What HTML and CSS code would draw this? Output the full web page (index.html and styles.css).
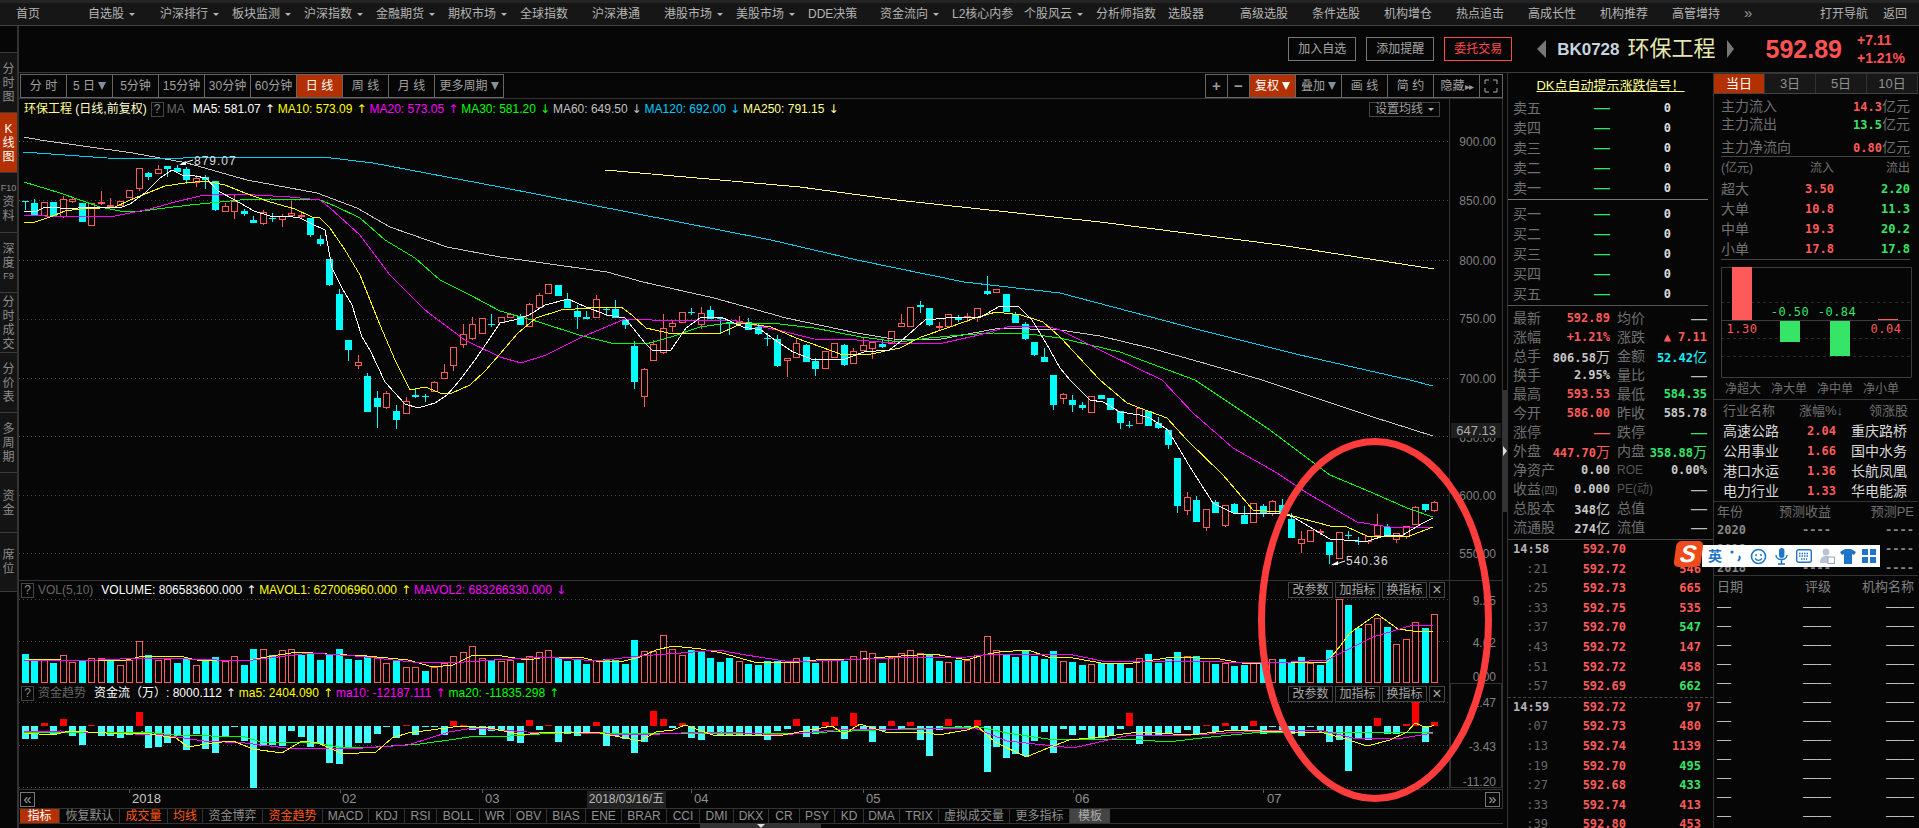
FILE: index.html
```html
<!DOCTYPE html>
<html>
<head>
  <meta charset="utf-8">
  <title>BK0728 环保工程</title>
  <link rel="stylesheet" href="styles.css">
</head>
<body>
<nav class="nav">
  <a>首页</a><a>自选股<i class="caret"></i></a><a>沪深排行<i class="caret"></i></a><a>板块监测<i class="caret"></i></a><a>沪深指数<i class="caret"></i></a><a>金融期货<i class="caret"></i></a><a>期权市场<i class="caret"></i></a><a>全球指数</a><a>沪深港通</a><a>港股市场<i class="caret"></i></a><a>美股市场<i class="caret"></i></a><a>DDE决策</a><a>资金流向<i class="caret"></i></a><a>L2核心内参</a><a>个股风云<i class="caret"></i></a><a>分析师指数</a><a>选股器</a><a>高级选股</a><a>条件选股</a><a>机构增仓</a><a>热点追击</a><a>高成长性</a><a>机构推荐</a><a>高管增持</a><a class="more">»</a>
  <div class="nav-right"><a>打开导航</a><a>返回</a></div>
</nav>

<div class="page">
  <aside class="side">
    <div class="side-tab">分<br>时<br>图</div>
    <div class="side-tab on">K<br>线<br>图</div>
    <div class="side-tab"><small>F10</small><span>资<br>料</span></div>
    <div class="side-tab"><span>深<br>度</span><small>F9</small></div>
    <div class="side-tab">分<br>时<br>成<br>交</div>
    <div class="side-tab">分<br>价<br>表</div>
    <div class="side-tab">多<br>周<br>期</div>
    <div class="side-tab">资<br>金</div>
    <div class="side-tab">席<br>位</div>
  </aside>

  <div class="main">
    <header class="head">
      <div class="hbtn">加入自选</div>
      <div class="hbtn">添加提醒</div>
      <div class="hbtn trade">委托交易</div>
      <i class="tri-left"></i>
      <span class="code">BK0728</span>
      <span class="name">环保工程</span>
      <i class="tri-right"></i>
      <span class="price">592.89</span>
      <div class="change"><div>+7.11</div><div>+1.21%</div></div>
    </header>

    <div class="work">
      <section class="chart">
        <div class="tools">
          <div class="tabs">
            <div class="tab">分 时</div><div class="tab">5 日<i class="drop"></i></div><div class="tab">5分钟</div><div class="tab">15分钟</div><div class="tab">30分钟</div><div class="tab">60分钟</div><div class="tab on">日 线</div><div class="tab">周 线</div><div class="tab">月 线</div><div class="tab wide">更多周期<i class="drop"></i></div>
          </div>
          <div class="tabs">
            <div class="tab sq">+</div><div class="tab sq">−</div><div class="tab on">复权<i class="drop white"></i></div><div class="tab">叠加<i class="drop"></i></div><div class="tab">画 线</div><div class="tab">简 约</div><div class="tab">隐藏<span class="hide-arrows">▸▸</span></div><div class="tab sq full"><svg width="14" height="14" viewBox="0 0 14 14"><path d="M1 5V1h4M9 1h4v4M13 9v4H9M5 13H1V9" fill="none" stroke="#aaa"/></svg></div>
          </div>
        </div>

        <div class="plot">
          <svg id="plot" class="plot-svg" viewBox="19 99 1484 709" width="1484" height="709"></svg>

          <div class="legend kline">
            <span class="yl">环保工程</span><span class="pale">&nbsp;(日线,前复权)</span><b class="qm">?</b><span class="gr">MA</span>
            <span class="wh ma">MA5: 581.07<i>↑</i></span><span class="ye ma">MA10: 573.09<i>↑</i></span><span class="mg ma">MA20: 573.05<i>↑</i></span><span class="gn ma">MA30: 581.20<i>↓</i></span><span class="si ma">MA60: 649.50<i>↓</i></span><span class="bl ma">MA120: 692.00<i>↓</i></span><span class="yl ma">MA250: 791.15<i>↓</i></span>
          </div>
          <div class="set-ma">设置均线<i class="caret"></i></div>

          <div class="legend vol">
            <b class="qm">?</b><span class="gr lab">VOL(5,10)</span>
            <span class="wh ma">VOLUME: 806583600.000<i>↑</i></span><span class="ye ma">MAVOL1: 627006960.000<i>↑</i></span><span class="mg ma">MAVOL2: 683266330.000<i>↓</i></span>
          </div>
          <div class="pane-btns vol-btns"><div>改参数</div><div>加指标</div><div>换指标</div><div class="x">×</div></div>

          <div class="legend flow">
            <b class="qm">?</b><span class="gr lab">资金趋势</span>
            <span class="wh ma">资金流（万）: 8000.112<i>↑</i></span><span class="ye ma">ma5: 2404.090<i>↑</i></span><span class="mg ma">ma10: -12187.111<i>↑</i></span><span class="gn ma">ma20: -11835.298<i>↑</i></span>
          </div>
          <div class="pane-btns flow-btns"><div>改参数</div><div>加指标</div><div>换指标</div><div class="x">×</div></div>

          <div class="pager left">«</div>
          <div class="pager right">»</div>
          <div class="date-tip">2018/03/16/五</div>
        </div>

        <div class="index-tabs">
          <div class="on">指标</div><div>恢复默认</div><div class="hot">成交量</div><div class="hot">均线</div><div>资金博弈</div><div class="hot">资金趋势</div><div>MACD</div><div>KDJ</div><div>RSI</div><div>BOLL</div><div>WR</div><div>OBV</div><div>BIAS</div><div>ENE</div><div>BRAR</div><div>CCI</div><div>DMI</div><div>DKX</div><div>CR</div><div>PSY</div><div>KD</div><div>DMA</div><div>TRIX</div><div>虚拟成交量</div><div>更多指标</div><div class="tpl">模板</div>
        </div>
        <div class="foot"><div class="foot-handle"><i></i></div></div>
      </section>

      <div class="gutter"><div class="gutter-bar"><i></i></div></div>

      <section class="book">
        <div class="book-title"><u>DK点自动提示涨跌信号！</u></div>
        <div class="levels">
          <div><span>卖五</span><em>—</em><b>0</b></div>
          <div><span>卖四</span><em>—</em><b>0</b></div>
          <div><span>卖三</span><em>—</em><b>0</b></div>
          <div><span>卖二</span><em>—</em><b>0</b></div>
          <div><span>卖一</span><em>—</em><b>0</b></div>
        </div>
        <div class="levels buy">
          <div><span>买一</span><em>—</em><b>0</b></div>
          <div><span>买二</span><em>—</em><b>0</b></div>
          <div><span>买三</span><em>—</em><b>0</b></div>
          <div><span>买四</span><em>—</em><b>0</b></div>
          <div><span>买五</span><em>—</em><b>0</b></div>
        </div>
        <div class="quote">
          <div><span>最新</span><b class="up">592.89</b></div><div><span>均价</span><em>—</em></div>
          <div><span>涨幅</span><b class="up">+1.21%</b></div><div><span>涨跌</span><b class="up">▲ 7.11</b></div>
          <div><span>总手</span><b>806.58<small>万</small></b></div><div><span>金额</span><b class="cy">52.42<small>亿</small></b></div>
          <div><span>换手</span><b>2.95%</b></div><div><span>量比</span><em>—</em></div>
          <div><span>最高</span><b class="up">593.53</b></div><div><span>最低</span><b class="dn">584.35</b></div>
          <div><span>今开</span><b class="up">586.00</b></div><div><span>昨收</span><b>585.78</b></div>
          <div><span>涨停</span><em class="up">—</em></div><div><span>跌停</span><em class="dn">—</em></div>
          <div><span>外盘</span><b class="up">447.70<small>万</small></b></div><div><span>内盘</span><b class="dn">358.88<small>万</small></b></div>
          <div><span>净资产</span><b>0.00</b></div><div><span class="tiny">ROE</span><b>0.00%</b></div>
          <div><span>收益<small class="quarter">(四)</small></span><b>0.000</b></div><div><span class="tiny">PE(动)</span><em>—</em></div>
          <div><span>总股本</span><b>348<small>亿</small></b></div><div><span>总值</span><em>—</em></div>
          <div><span>流通股</span><b>274<small>亿</small></b></div><div><span>流值</span><em>—</em></div>
        </div>
        <div class="ticks">
          <div><span class="min">14:58</span><b class="up">592.70</b><b class="dn">652</b></div>
          <div><span>:21</span><b class="up">592.72</b><b class="up">546</b></div>
          <div><span>:25</span><b class="up">592.73</b><b class="up">665</b></div>
          <div><span>:33</span><b class="up">592.75</b><b class="up">535</b></div>
          <div><span>:37</span><b class="up">592.70</b><b class="dn">547</b></div>
          <div><span>:43</span><b class="up">592.72</b><b class="up">147</b></div>
          <div><span>:51</span><b class="up">592.72</b><b class="up">458</b></div>
          <div><span>:57</span><b class="up">592.69</b><b class="dn">662</b></div>
        </div>
        <div class="ticks next">
          <div><span class="min">14:59</span><b class="up">592.72</b><b class="up">97</b></div>
          <div><span>:07</span><b class="up">592.73</b><b class="up">480</b></div>
          <div><span>:13</span><b class="up">592.74</b><b class="up">1139</b></div>
          <div><span>:19</span><b class="up">592.70</b><b class="dn">495</b></div>
          <div><span>:27</span><b class="up">592.68</b><b class="dn">433</b></div>
          <div><span>:33</span><b class="up">592.74</b><b class="up">413</b></div>
          <div><span>:39</span><b class="up">592.80</b><b class="up">453</b></div>
        </div>
      </section>

      <section class="side-info">
        <div class="day-tabs"><div class="on">当日</div><div>3日</div><div>5日</div><div>10日</div></div>
        <div class="money">
          <div><span>主力流入</span><p><b class="up">14.3</b>亿元</p></div>
          <div><span>主力流出</span><p><b class="dn">13.5</b>亿元</p></div>
          <div class="net"><span>主力净流向</span><p><b class="up">0.80</b>亿元</p></div>
        </div>
        <div class="orders">
          <div class="orders-head"><span>(亿元)</span><span>流入</span><span>流出</span></div>
          <div><span>超大</span><b class="up">3.50</b><b class="dn">2.20</b></div>
          <div><span>大单</span><b class="up">10.8</b><b class="dn">11.3</b></div>
          <div><span>中单</span><b class="up">19.3</b><b class="dn">20.2</b></div>
          <div><span>小单</span><b class="up">17.8</b><b class="dn">17.8</b></div>
        </div>
        <svg class="net-bars" width="191" height="111" viewBox="1722 268 191 111">
          <path class="grid" d="M1722 303.5H1912M1722 339.5H1912M1722 357.5H1912"/>
          <path class="frame" d="M1722.5 378V268.5H1912.5V378M1722.5 378.5H1912.5M1722 321.5H1912"/>
          <rect x="1733" y="268" width="20" height="53" fill="#ff5a5a"/>
          <rect x="1781" y="322" width="20" height="21" fill="#36e468"/>
          <rect x="1831" y="322" width="20" height="35" fill="#36e468"/>
          <rect x="1879" y="320" width="20" height="1" fill="#ff5a5a"/>
          <text x="1743" y="334" fill="#ff5a5a">1.30</text>
          <text x="1791" y="317" fill="#36e468">-0.50</text>
          <text x="1838" y="317" fill="#36e468">-0.84</text>
          <text x="1887" y="334" fill="#ff5a5a">0.04</text>
        </svg>
        <div class="net-labels"><span>净超大</span><span>净大单</span><span>净中单</span><span>净小单</span></div>
        <div class="sector">
          <div class="sector-head"><span>行业名称</span><span>涨幅%↓</span><span>领涨股</span></div>
          <div><span>高速公路</span><b class="up">2.04</b><span>重庆路桥</span></div>
          <div><span>公用事业</span><b class="up">1.66</b><span>国中水务</span></div>
          <div><span>港口水运</span><b class="up">1.36</b><span>长航凤凰</span></div>
          <div><span>电力行业</span><b class="up">1.33</b><span>华电能源</span></div>
        </div>
        <div class="forecast">
          <div><span>年份</span><span>预测收益</span><span>预测PE</span></div>
          <div><b>2020</b><b>----</b><b>----</b></div>
          <div><b>2019</b><b>----</b><b>----</b></div>
          <div><b>2018</b><b>----</b><b>----</b></div>
        </div>
        <div class="ratings">
          <div class="ratings-head"><span>日期</span><span>评级</span><span>机构名称</span></div>
          <div><em>—</em><em>——</em><em>——</em></div>
          <div><em>—</em><em>——</em><em>——</em></div>
          <div><em>—</em><em>——</em><em>——</em></div>
          <div><em>—</em><em>——</em><em>——</em></div>
          <div><em>—</em><em>——</em><em>——</em></div>
          <div><em>—</em><em>——</em><em>——</em></div>
          <div><em>—</em><em>——</em><em>——</em></div>
          <div><em>—</em><em>——</em><em>——</em></div>
          <div><em>—</em><em>——</em><em>——</em></div>
          <div><em>—</em><em>——</em><em>——</em></div>
          <div><em>—</em><em>——</em><em>——</em></div>
          <div><em>—</em><em>——</em><em>——</em></div>
        </div>
      </section>
    </div>
  </div>
</div>

<!-- input method bar floats over the quote panels -->
<div class="ime">
  <div class="ime-logo"><span>S</span></div>
  <div class="ime-bar">
    <span class="ime-lang">英</span>
    <svg width="12" height="16" viewBox="0 0 12 16"><circle cx="2" cy="4" r="1.6" fill="#1f76c9"/><path d="M9 8c1 1 1 3-1 5" stroke="#1f76c9" stroke-width="2" fill="none"/></svg>
    <svg width="17" height="17" viewBox="0 0 17 17"><circle cx="8.5" cy="8.5" r="7" fill="none" stroke="#1f76c9" stroke-width="1.6"/><circle cx="6" cy="7" r="1" fill="#1f76c9"/><circle cx="11" cy="7" r="1" fill="#1f76c9"/><path d="M5 10.5c2 2.5 5 2.5 7 0" stroke="#1f76c9" stroke-width="1.4" fill="none"/></svg>
    <svg width="13" height="17" viewBox="0 0 13 17"><rect x="4" y="0" width="5.4" height="10" rx="2.7" fill="#1f76c9"/><path d="M1 7c0 6 11 6 11 0M6.5 12v4M3 16h7" stroke="#1f76c9" stroke-width="1.5" fill="none"/></svg>
    <svg width="16" height="14" viewBox="0 0 16 14"><rect x=".7" y=".7" width="14.6" height="12.6" rx="2" fill="none" stroke="#1f76c9" stroke-width="1.4"/><path d="M3 4.5h10M3 7h10M5 10h6" stroke="#1f76c9" stroke-width="1.5" stroke-dasharray="1.5 1"/></svg>
    <svg class="tight" width="15" height="16" viewBox="0 0 15 16"><circle cx="6" cy="4" r="3.4" fill="#b9c4d0"/><path d="M0 15c0-6 3-7 6-7s6 1 6 7z" fill="#b9c4d0"/><rect x="8" y="9" width="6.5" height="6.5" fill="#fff" stroke="#9aa6b2"/></svg>
    <svg class="tight2" width="16" height="15" viewBox="0 0 16 15"><path d="M5 0h6l5 3-2 3-2-1v10H4V5L2 6 0 3z" fill="#1f76c9"/></svg>
    <svg width="14" height="14" viewBox="0 0 14 14"><path d="M0 0h6v6H0zM8 0h6v6H8zM0 8h6v6H0zM8 8h6v6H8z" fill="#1f76c9"/></svg>
  </div>
</div>

<script src="chart.js"></script>
</body>
</html>
```

FILE: styles.css
```css
* {box-sizing:border-box;}
html, body {margin:0;height:100%;}
body {background:#060606;color:#a0a0a0;font:12px/15px "Liberation Sans","Noto Sans CJK SC",sans-serif;overflow:hidden;width:1919px;height:828px;position:relative;}
i, em {font-style:normal;}
b {font-weight:bold;}

.up {color:#ff5a5a;}
.dn {color:#36e468;}
.cy {color:#19f0ff;}

/* top nav */
.nav {height:26px;padding:0 12px 0 16px;display:flex;align-items:center;background:#161616;border-top:3px solid #242424;border-bottom:1px solid #444;color:#b4b4b4;}
.nav a {width:72px;flex:none;display:flex;align-items:center;}
.nav a.more {color:#999;font-size:15px;width:auto;margin-top:-3px;}
.nav-right {margin-left:auto;display:flex;gap:15px;}
.nav-right a {width:auto;}
.caret {display:inline-block;margin-left:5px;border:3px solid transparent;border-top:3px solid #b4b4b4;border-bottom:0;}

.page {display:flex;height:802px;}

/* left tabs */
.side {width:19px;flex:none;padding-top:26px;border-right:2px solid #333;}
.side-tab {height:60px;display:flex;flex-direction:column;justify-content:center;align-items:center;font-size:12px;line-height:14px;color:#8c8c8c;background:#141414;border-top:1px solid #3c3c3c;text-align:center;}
.side-tab small {display:block;font-size:9px;line-height:13px;}
.side-tab.on {background:#b33000;color:#fff;}
.side-tab:last-child {border-bottom:1px solid #3c3c3c;}

.main {flex:1;min-width:0;}

/* code header */
.head {height:47px;border-bottom:1px solid #3a3a3a;display:flex;align-items:center;justify-content:flex-end;padding-right:16px;}
.hbtn {width:68px;height:24px;line-height:22px;text-align:center;border:1px solid #777;color:#a8a8a8;margin-right:10px;}
.hbtn.trade {border-color:#ff4a4a;color:#ff4a4a;margin-right:25px;}
.tri-left, .tri-right {width:0;height:0;border:9px solid transparent;}
.tri-left {border-left:0;border-right:9px solid #777;}
.tri-right {border-right:0;border-left:7px solid #777;}
.code {font-size:17px;font-weight:bold;color:#c8d4e0;margin-left:11px;}
.name {font-size:22px;color:#e6e6b0;margin:0 11px 0 8px;line-height:26px;}
.price {font-size:25px;font-weight:bold;color:#ff5252;margin-left:32px;}
.change {font-size:14px;font-weight:bold;color:#ff5252;margin-left:15px;line-height:18px;width:46px;}

.work {display:flex;height:755px;}

/* chart */
.chart {width:1484px;flex:none;}
.tools {height:26px;padding:1px 0 1px 1px;display:flex;justify-content:space-between;border-bottom:1px solid #333;}
.tabs {display:flex;}
.tab {width:47px;height:24px;line-height:22px;text-align:center;border:1px solid #666;margin-left:-1px;color:#a0a0a0;white-space:nowrap;}
.tabs:first-child .tab:first-child {margin-left:0;}
.tab.on {background:#b33000;color:#fff;}
.tab.wide {width:70px;}
.tab.sq {width:23px;font-size:15px;font-weight:bold;color:#999;}
.tab.full {width:24px;}
.tab.full svg {margin-top:4px;}
.drop {display:inline-block;margin-left:3px;border:4px solid transparent;border-top:8px solid #8090a0;border-bottom:0;}
.drop.white {border-top-color:#fff;}
.hide-arrows {font-size:10px;letter-spacing:-1px;color:#999;}

.plot {position:relative;height:709px;}
.plot-svg {display:block;}
.plot-svg text {font-size:12px;fill:#808080;}
.plot-svg .peak {fill:#ddd;letter-spacing:1px;}
.plot-svg .last {fill:#aaa;font-size:13px;}
.plot-svg .tick-label {fill:#909090;font-size:13px;}
.plot-svg .year {fill:#c8c8c8;font-size:13px;}

.legend {position:absolute;display:flex;align-items:center;white-space:nowrap;height:15px;}
.legend.kline {left:5px;top:3px;}
.legend.vol {left:2px;top:484px;}
.legend.flow {left:2px;top:587px;}
.qm {width:13px;height:15px;line-height:13px;border:1px solid #444;color:#888;text-align:center;font-weight:normal;margin:0 3px 0 4px;}
.legend.vol .qm, .legend.flow .qm {margin:0 4px 0 0;}
.ma {display:inline-flex;}
.ma i {width:7px;margin:0 6px 0 4px;font-family:"DejaVu Sans",sans-serif;}
.kline .gr {margin-right:8px;}
.lab {margin-right:8px;}
.wh {color:#fff;} .ye {color:#ff0;} .mg {color:#f0f;} .gn {color:#0f0;} .si {color:#c0c0c0;} .bl {color:#0cf;} .yl {color:#ffff90;} .gr {color:#666;} .pale {color:#ffffc8;}

.set-ma {position:absolute;right:63px;top:3px;width:71px;height:15px;line-height:13px;border:1px solid #444;text-align:center;color:#a0a0a0;}
.set-ma .caret {margin-bottom:2px;}

.pane-btns {position:absolute;right:58px;display:flex;gap:2px;}
.vol-btns {top:483px;}
.flow-btns {top:587px;}
.pane-btns div {width:45px;height:16px;line-height:14px;text-align:center;border:1px solid #444;color:#a8a8a8;}
.pane-btns .x {width:16px;font-size:16px;}

.pager {position:absolute;top:693px;width:15px;height:15px;line-height:12px;border:1px solid #777;color:#aaa;text-align:center;font-size:14px;}
.pager.left {left:1px;}
.pager.right {right:3px;}
.date-tip {position:absolute;left:568px;top:692px;width:79px;height:17px;line-height:17px;background:#222;color:#bbb;text-align:center;}

.index-tabs {height:16px;display:grid;grid-template-columns:40px 60px 48px 35px 60px 60px 46px 36px 32px 43px 31px 36px 39px 36px 45px 33px 34px 35px 31px 35px 29px 36px 39px 71px 60px 40px;padding-left:1px;border-top:1px solid #333;border-bottom:1px solid #333;}
.index-tabs div {text-align:center;line-height:14px;border-right:1px solid #333;color:#909090;white-space:nowrap;}
.index-tabs .on {background:#b33000;color:#fff;}
.index-tabs .hot {color:#ff5a14;}
.index-tabs .tpl {background:#444;color:#aaa;border:0;}
.foot {height:4px;position:relative;}
.foot-handle {width:121px;height:4px;margin-left:681px;background:#333;display:flex;justify-content:center;}
.foot-handle i {border:4px solid transparent;border-top:4px solid #ddd;border-bottom:0;}

.gutter {width:5px;flex:none;position:relative;border-right:1px solid #333;}
.gutter-bar {position:absolute;left:0;top:317px;width:5px;height:122px;background:#333;display:flex;align-items:center;}
.gutter-bar i {border:5px solid transparent;border-left:4px solid #ddd;border-right:0;}

/* order book */
.book {width:206px;flex:none;border-right:1px solid #333;font-size:14px;}
.book-title {height:25px;line-height:25px;text-align:center;color:#ffff90;font-size:13px;}
.levels {padding:0 0 1px 5px;border-bottom:1px solid #777;margin-right:5px;}
.levels.buy {padding-top:4px;border-color:#555;}
.levels div {height:20px;line-height:20px;display:grid;grid-template-columns:81px 16px 61px;color:#707070;}
.levels em {color:#36e468;font-size:16px;}
.levels b {font:bold 12px/20px "DejaVu Sans Mono",monospace;color:#ddd;text-align:right;}

.quote {display:grid;grid-template-columns:97px 90px;column-gap:7px;padding:3px 0 2px 5px;border-bottom:1px solid #444;margin-right:0;}
.quote div {height:19px;line-height:19px;display:flex;justify-content:space-between;color:#707070;white-space:nowrap;}
.quote b {font:bold 12px/19px "DejaVu Sans Mono",monospace;color:#c8c8c8;}
.quote b.up {color:#ff5a5a;} .quote b.dn {color:#36e468;} .quote b.cy {color:#19f0ff;}
.quote small {font:normal 14px/19px "Noto Sans CJK SC",sans-serif;}
.quote small.quarter {font-size:10px;}
.quote em {font-size:16px;color:#bbb;}
.quote em.up {color:#ff5a5a;} .quote em.dn {color:#36e468;}
.quote .tiny {font-size:12px;color:#555;}

.ticks {border-bottom:1px dashed #444;padding-left:5px;}
.ticks.next {border:0;}
.ticks div {height:19.6px;line-height:19.6px;display:grid;grid-template-columns:35px 78px 75px;color:#666;font:12px/19.6px "DejaVu Sans Mono",monospace;}
.ticks span {text-align:right;}
.ticks .min {font-weight:bold;color:#b4b4b4;}
.ticks b {text-align:right;}

/* right column */
.side-info {width:204px;flex:none;font-size:13px;color:#707070;}
.day-tabs {display:grid;grid-template-columns:repeat(4,1fr);height:21px;border-bottom:1px solid #444;border-top:1px solid #333;}
.day-tabs div {text-align:center;line-height:19px;background:#181818;border-right:1px solid #333;color:#909090;}
.day-tabs .on {background:#b33000;color:#fff;}
.money {margin:0 8px 0 7px;padding-top:3px;height:63px;border-bottom:1px solid #444;font-size:14px;}
.money div {display:flex;justify-content:space-between;height:18px;line-height:18px;}
.money .net {height:22px;padding-top:4px;margin-top:1px;}
.money p {margin:0;}
.money b {font:bold 12px/18px "DejaVu Sans Mono",monospace;}
.orders {margin:0 8px 7px 7px;border-bottom:1px solid #444;height:103px;font-size:14px;}
.orders div {display:grid;grid-template-columns:1fr 60px 76px;height:20px;line-height:20px;}
.orders b {font:bold 12px/20px "DejaVu Sans Mono",monospace;text-align:right;}
.orders .orders-head {height:22px;line-height:22px;font-size:12px;}
.orders-head span + span {text-align:right;}
.net-bars {display:block;margin-left:7px;}
.net-bars text {font:12px "DejaVu Sans Mono",monospace;text-anchor:middle;letter-spacing:.5px;}
.net-bars .grid {stroke:#2a2a2a;stroke-dasharray:3 3;}
.net-bars .frame {stroke:#3c3c3c;fill:none;}
.net-labels {display:flex;gap:10px;padding:4px 0 0 11px;height:21px;font-size:12px;line-height:15px;}
.sector {border-top:1px solid #333;height:103px;border-bottom:1px solid #333;padding-left:9px;}
.sector div {display:grid;grid-template-columns:84px 28px 72px;height:20px;line-height:20px;color:#d8d8d8;font-size:14px;}
.sector div span {white-space:nowrap;}
.sector div span:last-child {padding-left:16px;}
.sector b {font:bold 12px/20px "DejaVu Sans Mono",monospace;text-align:right;}
.sector div.sector-head {height:21px;line-height:21px;font-size:13px;color:#707070;grid-template-columns:76px 42px 66px;}
.sector div.sector-head span:last-child {padding-left:28px;}
.forecast {border-bottom:1px solid #333;padding:0 4px 0 3px;height:74px;}
.forecast div {display:grid;grid-template-columns:1fr 83px 83px;height:19px;line-height:19px;color:#707070;}
.forecast span + span, .forecast b + b {text-align:right;}
.forecast b {font:bold 12px/19px "DejaVu Sans Mono",monospace;color:#888;}
.ratings {padding:0 4px 0 3px;color:#808080;}
.ratings div {display:grid;grid-template-columns:1fr 83px 83px;height:19px;line-height:19px;}
.ratings div.ratings-head {height:21px;line-height:21px;}
.ratings span + span, .ratings em + em {text-align:right;}
.ratings em {font-size:14px;color:#bbb;white-space:nowrap;}

/* floating ime */
.ime {position:absolute;left:1675px;top:541px;height:26px;display:flex;align-items:flex-end;}
.ime-logo {width:27px;height:26px;background:#ef4a1c;border-radius:5px;transform:skewX(-8deg);text-align:center;position:relative;z-index:1;}
.ime-logo span {font:italic bold 24px/26px "Liberation Sans",sans-serif;color:#fff;}
.ime-bar {width:178px;height:22px;background:#fff;display:flex;align-items:center;gap:8px;padding-left:6px;}
.ime-bar .tight {margin-right:-3px;}
.ime-bar .tight2 {margin-right:-2px;}
.ime-lang {font-size:14px;font-weight:bold;color:#1f76c9;}
```

FILE: chart.js
```js
// K线图: 数据按屏幕坐标记录 (svg viewBox 与页面坐标一致)
var X0=24.5, STEP=9.525, RED='#ff5a5a', CYAN='#00ffff';
function cx(i) {return Math.round(X0+STEP*i);}

// [涨?, 实体上, 实体下, 最高, 最低]
var k=[
[0,201,202,201,210],[0,203,215,199,216],[1,202,216,202,216],[0,202,217,202,217],[1,199,217,196,218],[1,199,202,197,203],[0,203,222,203,222],[1,203,226,203,226],[1,202,204,191,205],[1,205,207,198,207],
[1,201,206,201,206],[1,190,198,190,198],[1,168,189,168,191],[0,173,177,172,180],[1,169,174,165,174],[0,166,169,166,177],[0,168,172,165,172],[0,169,180,167,184],[1,178,183,175,187],[0,177,180,175,189],
[0,181,210,181,211],[1,206,212,203,212],[1,201,212,195,219],[0,211,214,209,216],[0,220,223,216,223],[1,212,224,210,225],[0,218,219,213,222],[1,216,220,214,227],[1,213,216,201,216],[1,215,216,211,219],
[0,218,235,218,237],[0,239,244,235,246],[0,259,285,259,286],[0,294,330,289,330],[0,340,350,340,361],[1,362,366,355,369],[0,376,412,373,412],[0,398,407,391,428],[1,393,408,391,409],[0,411,420,405,429],
[1,401,414,397,414],[0,395,397,388,398],[0,396,397,394,402],[1,382,392,381,392],[1,372,379,364,379],[1,347,366,347,371],[1,334,345,324,348],[1,324,339,317,340],[1,318,334,318,334],[0,324,325,314,327],
[1,317,323,317,323],[1,314,318,314,318],[0,316,325,314,325],[1,304,327,303,327],[1,295,308,293,308],[1,284,294,284,294],[0,285,296,285,296],[0,299,308,293,308],[0,311,317,305,329],[0,317,319,311,319],
[1,299,318,295,318],[0,309,310,307,316],[0,309,318,300,318],[0,320,325,318,329],[0,346,382,341,389],[1,369,397,368,407],[1,344,361,340,361],[1,328,353,314,354],[1,323,327,320,332],[1,312,323,312,323],
[0,312,313,308,315],[1,313,325,307,329],[0,310,319,306,319],[0,318,319,318,333],[0,322,323,322,335],[1,321,323,316,324],[0,322,330,318,330],[0,327,334,323,335],[0,338,339,333,346],[0,339,366,335,367],
[1,358,361,358,377],[1,343,358,338,358],[0,345,362,344,362],[0,361,369,358,376],[1,351,369,351,369],[1,343,358,343,358],[0,345,365,344,366],[1,351,364,348,364],[1,345,351,337,351],[1,342,349,342,359],
[0,344,347,339,348],[1,331,344,331,344],[1,323,327,314,327],[1,307,327,307,327],[0,305,307,301,313],[0,308,325,308,326],[1,326,327,322,330],[1,314,327,314,327],[0,317,320,315,322],[1,316,317,313,322],
[1,308,318,308,322],[0,291,294,276,295],[1,289,293,289,293],[0,294,312,294,312],[0,314,323,312,323],[0,324,339,322,340],[0,342,355,342,356],[0,357,362,348,362],[0,375,405,375,410],
[1,394,399,393,404],[0,400,405,395,412],[0,405,408,402,410],[1,396,413,396,413],[0,395,399,395,399],[0,398,410,398,410],[0,411,423,411,429],[0,425,426,421,428],[1,408,424,408,424],[0,411,426,411,426],
[0,423,428,417,429],[0,430,445,430,449],[0,458,506,458,513],[1,497,511,492,515],[0,500,522,496,522],[1,509,528,509,531],[0,502,513,500,513],[1,505,526,505,527],[0,504,513,503,513],[0,515,524,506,524],
[1,503,523,503,523],[0,506,513,504,517],[1,501,514,500,516],[0,505,513,499,513],[0,519,538,513,538],[1,539,544,531,553],[1,530,542,530,542],[1,531,533,529,535],[0,542,555,542,564],[1,532,559,532,559],
[0,535,536,531,539],[0,541,542,537,545],[1,536,542,536,544],[1,525,536,514,536],[0,527,535,524,535],[1,533,540,533,543],[1,526,537,526,539],[1,507,525,506,525],[0,504,510,504,512],[1,502,511,501,512]
];

// 成交量高度: 正=阳(空心) 负=阴(实心)
var vol=[-29,-22,23,-20,28,21,-22,25,25,-23,18,23,42,-28,23,24,-20,-24,18,-22,-26,22,27,-18,-34,34,-28,33,34,-28,-29,-23,-28,-34,-24,-23,-27,26,20,-23,16,16,-12,16,20,27,31,37,25,-23,22,23,-20,27,31,33,-26,-22,-23,-19,23,-24,-23,-19,-43,32,32,48,34,28,-33,-32,-25,-21,-25,22,-19,-18,-22,-22,21,25,-26,-20,23,24,-22,27,32,30,-20,26,30,33,30,-28,-22,21,-23,23,28,47,33,-29,-26,-33,-27,-24,-32,22,-21,-18,19,-20,-19,-20,-15,25,-29,-20,-24,-31,27,-27,22,-19,20,-17,-18,21,-20,24,-24,-21,-26,20,-18,-33,84,-78,-55,59,65,-56,39,44,61,-55,69];

// 资金流柱
var flow=[-13,-13,3,-8,7,-10,-19,1,-10,-10,-12,-9,14,-22,-21,-17,-10,-24,-8,-23,-27,-10,-1,-15,-62,-20,-19,-20,-5,-11,-21,-18,-37,-38,-22,-17,-17,-8,-1,-12,1,-9,-1,-1,-9,5,1,-4,-9,-5,-5,-15,-17,6,-4,1,-16,-8,-10,-8,4,-20,-10,-13,-27,-16,15,7,-2,3,-12,-14,-7,-9,-9,-10,-9,-10,-14,-5,-3,7,-11,-8,4,9,-13,13,-5,-16,-5,5,-3,4,-14,-30,-4,7,-1,-1,6,-46,-21,-32,-28,-30,-15,-6,-27,-3,-9,-4,-13,-12,-10,-3,13,-18,-10,-9,-8,-7,-4,-8,1,-6,3,-5,-4,5,-8,-1,-4,-8,-10,-1,-4,-16,-14,-45,-13,-14,8,-8,-8,2,24,-16,4];

var lines=[
 {c:'#c4c4c4',p:'24,137 40,140 133,153 187,163 247,180 317,193 357,208 390,227 447,247 500,257 543,263 607,272 643,282 714,298 786,318 857,333 893,339 936,340 1000,328 1060,330 1100,336 1150,348 1200,362 1262,380 1307,395 1373,417 1433,436'},
 {c:'#00d0f0',p:'23,152 107,158 173,159 193,157 323,157 373,163 500,187 771,240 857,260 964,282 1060,293 1200,330 1300,355 1410,380 1433,386'},
 {c:'#ffff80',p:'605,170 640,173 800,187 897,200 1100,222 1280,245 1434,269'},
 {c:'#00ff00',p:'24,182 60,193 80,200 100,207 120,211 135,212 165,208 190,205 240,200 270,199 320,200 335,206 360,218 385,240 415,258 440,280 470,295 500,311 539,322 579,335 611,343 646,344 671,337 700,327 729,323 771,323 814,328 861,337 900,342 929,338 961,335 993,333 1029,334 1060,338 1120,352 1160,367 1195,380 1267,428 1330,475 1373,493 1407,508 1433,517'},
 {c:'#ff00ff',p:'24,215 45,216 115,216 130,213 150,209 175,202 200,196 225,194 255,195 290,197 320,200 330,208 360,235 390,275 425,310 465,340 500,357 521,363 546,355 582,337 625,319 679,321 732,320 786,332 814,339 857,340 893,343 943,343 979,335 1011,326 1046,326 1060,330 1110,355 1162,380 1193,413 1233,448 1277,473 1307,493 1357,522 1390,527 1433,527'},
 {c:'#ffff00',p:'24,223 35,222 50,217 65,211 80,209 100,208 115,207 130,200 145,194 165,186 185,183 205,181 225,185 245,193 270,202 295,209 312,217 320,218 330,228 345,250 360,275 380,325 395,360 410,390 425,387 433,390 440,393 452,393 470,385 485,371 500,354 518,333 536,318 561,310 589,308 621,307 632,315 646,328 668,333 721,333 743,323 771,327 796,338 821,347 843,355 871,354 900,348 921,337 950,327 975,318 996,312 1021,315 1043,322 1060,337 1100,380 1127,403 1140,408 1167,418 1187,440 1223,475 1253,510 1280,512 1300,518 1330,526 1347,527 1367,536 1407,537 1433,527'},
 {c:'#ffffff',p:'24,211 35,212 45,207 60,208 78,208 92,207 105,207 122,207 130,204 145,193 160,178 172,170 182,175 195,176 206,178 218,191 233,199 254,211 270,216 285,216 300,218 312,224 325,230 332,268 342,288 352,305 362,337 370,350 385,382 405,404 418,408 435,403 447,395 460,380 475,360 490,338 500,323 514,320 529,315 545,305 568,299 586,307 607,315 625,318 645,343 652,350 671,350 686,328 700,318 721,317 743,327 761,330 775,340 793,352 814,360 845,359 864,352 889,350 900,342 925,320 957,317 979,318 1000,306 1018,306 1032,320 1046,343 1060,368 1070,380 1090,400 1103,402 1120,412 1140,415 1150,418 1168,430 1190,467 1213,503 1233,513 1280,513 1293,517 1330,539 1358,541 1368,541 1387,535 1403,535 1423,523 1433,518'},
 // 成交量均线
 {c:'#ffff00',p:'24,659 61,660 122,661 139,657 163,656 184,657 196,660 245,661 278,655 298,652 327,654 367,656 408,660 433,667 453,665 473,655 502,656 527,660 547,657 580,657 596,661 624,661 640,657 656,650 673,646 701,649 722,653 754,662 791,663 824,659 852,660 885,657 934,654 967,660 983,655 999,652 1028,650 1048,657 1073,658 1107,664 1133,663 1173,657 1220,659 1247,664 1273,662 1327,662 1337,650 1350,633 1377,614 1398,629 1413,631 1433,631'},
 {c:'#ff00ff',p:'24,660 98,660 143,658 188,659 245,661 286,656 310,653 355,656 412,662 449,663 494,660 547,657 596,661 640,656 681,653 718,650 746,655 791,662 844,660 893,658 967,657 991,654 1056,654 1073,655 1107,662 1173,661 1273,663 1327,660 1373,637 1413,625 1433,625'},
 // 资金流均线
 {c:'#00ff00',p:'24,733 143,732 176,735 245,737 261,742 314,743 339,747 376,747 420,744 449,740 469,737 510,736 571,732 640,734 681,733 803,733 901,729 979,727 1007,733 1048,739 1130,739 1167,742 1211,737 1252,733 1320,732 1433,733'},
 {c:'#ff00ff',p:'24,732 61,731 106,733 163,735 204,741 245,743 286,748 363,748 408,745 449,732 473,728 527,732 580,733 640,735 681,733 722,732 783,735 844,729 926,729 975,728 1007,741 1073,748 1130,735 1191,735 1280,730 1320,730 1353,738 1403,738 1433,733'},
 {c:'#ffff00',p:'24,733 53,735 69,731 106,733 131,733 143,733 176,738 188,747 212,743 233,741 253,749 282,753 302,741 318,743 343,754 376,752 392,738 408,733 461,726 490,728 522,735 547,732 576,732 600,733 640,741 656,732 673,730 685,725 713,735 783,735 832,726 844,734 860,724 885,732 926,732 938,735 967,730 977,726 995,742 1026,757 1048,748 1069,740 1109,736 1138,732 1191,735 1232,730 1287,732 1320,732 1343,738 1367,746 1390,740 1407,732 1415,723 1427,728 1434,725'}
];

var s='';
function ln(d,c,extra) {s+='<path d="'+d+'" stroke="'+c+'" fill="none" '+(extra||'')+'/>';}
function txt(x,y,t,cls,anchor) {s+='<text x="'+x+'" y="'+y+'"'+(cls?' class="'+cls+'"':'')+(anchor?' text-anchor="'+anchor+'"':'')+'>'+t+'</text>';}

// 网格
[141,200,260,319,378,436,495,553,599,641,702,745,787].forEach(function(y) {
  ln('M19 '+(y+.5)+'H1449','#4a4a4a','stroke-dasharray="1 3"');
});
ln('M19 580.5H1502 M19 789.5H1502 M1449.5 99V789 M1502.5 99V808','#333');
ln('M1450.5 683.5H1501.5V787.5H1450.5Z','#333');
[129,340,482,691,863,1073,1263].forEach(function(x) {ln('M'+x+'.5 789V793','#555');});

// K线
k.forEach(function(c,i) {
  var x=cx(i), col=c[0]?RED:CYAN;
  if (c[3]<c[1]) ln('M'+x+'.5 '+c[3]+'V'+c[1],col);
  if (c[4]>c[2]) ln('M'+x+'.5 '+c[2]+'V'+c[4],col);
  if (c[0]) s+='<rect x="'+(x-3+.5)+'" y="'+(c[1]+.5)+'" width="6" height="'+Math.max(c[2]-c[1]-1,1)+'" fill="#060606" stroke="'+RED+'"/>';
  else s+='<rect x="'+(x-3)+'" y="'+c[1]+'" width="7" height="'+Math.max(c[2]-c[1],1)+'" fill="'+CYAN+'"/>';
});

// 成交量
vol.forEach(function(v,i) {
  var x=cx(i), h=Math.abs(v);
  if (v>0) s+='<rect x="'+(x-3+.5)+'" y="'+(683-h+.5)+'" width="6" height="'+(h-1)+'" fill="#060606" stroke="'+RED+'"/>';
  else s+='<rect x="'+(x-3)+'" y="'+(683-h)+'" width="7" height="'+h+'" fill="'+CYAN+'"/>';
});

// 资金流
flow.forEach(function(v,i) {
  var x=cx(i), h=Math.max(Math.abs(v),1);
  if (v>0) s+='<rect x="'+(x-3)+'" y="'+(726-h)+'" width="7" height="'+h+'" fill="#ff0000"/>';
  else s+='<rect x="'+(x-3)+'" y="726" width="7" height="'+h+'" fill="#44ffff"/>';
});

// 折线不做抗锯齿, 和行情软件的画法一样
lines.forEach(function(l) {s+='<polyline points="'+l.p+'" fill="none" stroke="'+l.c+'" stroke-width="1" shape-rendering="crispEdges"/>';});

// 最高最低标注
ln('M181 164L193 160','#fff'); s+='<path d="M179 165L186 161L186 165Z" fill="#fff"/>';
txt(194,165,'879.07','peak');
ln('M1333 565L1345 561','#fff'); s+='<path d="M1331 565L1338 561L1338 565Z" fill="#fff"/>';
txt(1346,565,'540.36','peak');

// 坐标
[[900,146],[850,205],[800,265],[750,323],[700,383],[650,442],[600,500],[550,558]].forEach(function(a) {
  txt(1496,a[1],a[0]+'.00','','end');
});
[['9.25',605],['4.62',647],['0.00',681],['1.47',707],['-3.43',751],['-11.20',786]].forEach(function(a) {
  txt(1496,a[1],a[0],'','end');
});
s+='<rect x="1451" y="423" width="50" height="15" fill="#1e1e1e"/>';
txt(1496,435,'647.13','last','end');

txt(132,803,'2018','year');
[['02',342],['03',485],['04',694],['05',866],['06',1075],['07',1267]].forEach(function(a) {txt(a[1],803,a[0],'tick-label');});

// 手工圈出的红色椭圆
s+='<ellipse cx="1375" cy="620" rx="113.5" ry="178.5" fill="none" stroke="#ff3c3c" stroke-width="7"/>';

document.getElementById('plot').innerHTML=s;
```
